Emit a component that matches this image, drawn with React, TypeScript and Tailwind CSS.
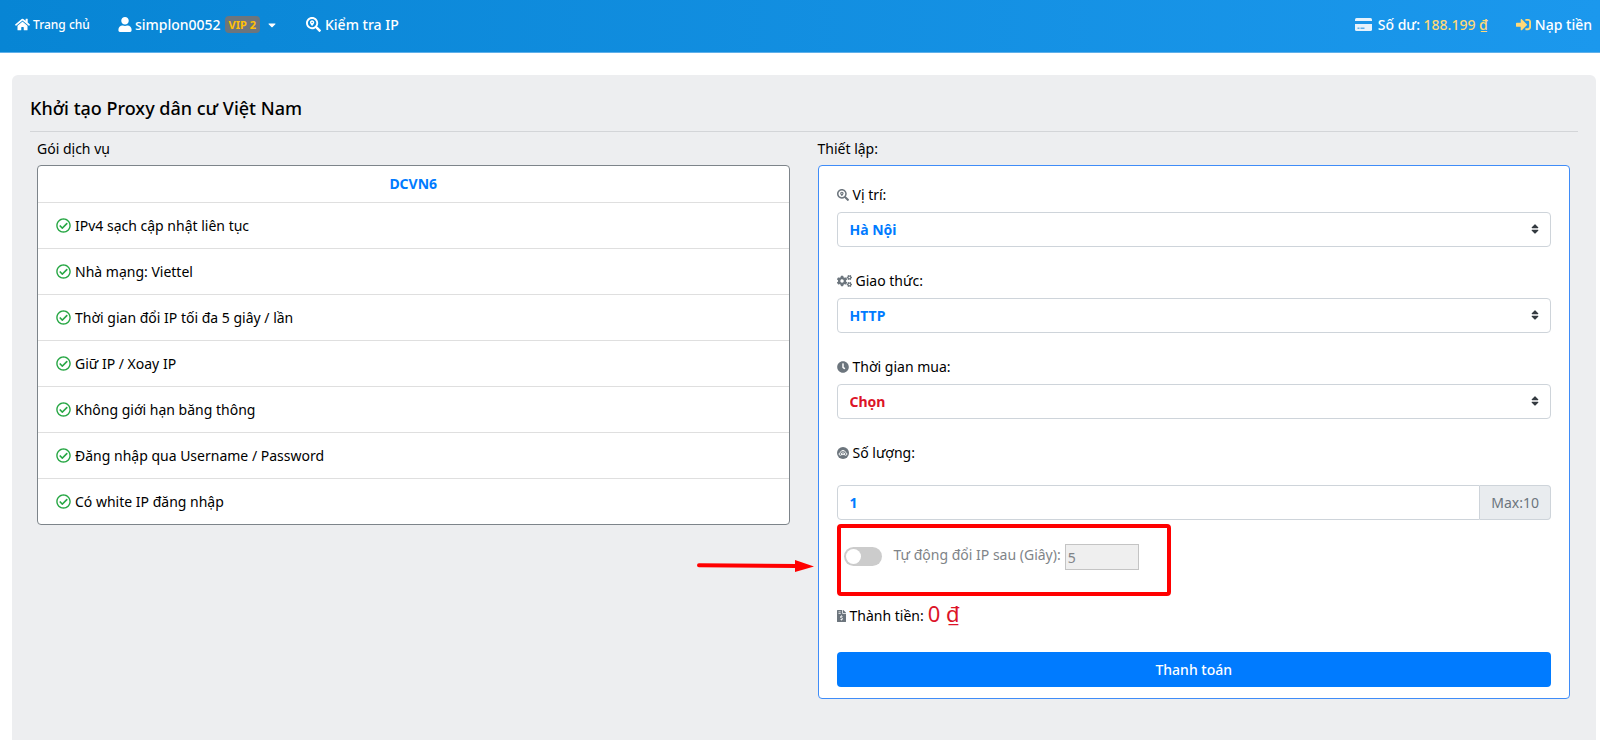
import React, { useState } from 'react';
import {
  FaHome,
  FaUser,
  FaSearchLocation,
  FaSignInAlt,
  FaRegCheckCircle,
  FaCogs,
  FaClock,
  FaCaretDown,
  FaSort,
  FaFileInvoiceDollar,
} from 'react-icons/fa';

const features = [
  'IPv4 sạch cập nhật liên tục',
  'Nhà mạng: Viettel',
  'Thời gian đổi IP tối đa 5 giây / lần',
  'Giữ IP / Xoay IP',
  'Không giới hạn băng thông',
  'Đăng nhập qua Username / Password',
  'Có white IP đăng nhập',
];

const CardIcon = () => (
  <svg viewBox="0 0 17 13" className="w-[17px] h-[13px]" fill="none">
    <rect x="0" y="0" width="17" height="13" rx="1.5" fill="#e6f2fc" />
    <rect x="0" y="3" width="17" height="3" fill="#1a94e8" />
    <path d="M2.5 10.3h2M5.5 10.3h4" stroke="#5aaeea" strokeWidth="1.4" />
  </svg>
);

const QuantityIcon = () => (
  <svg viewBox="0 0 12 12" className="w-3 h-3" fill="none">
    <circle cx="6" cy="6" r="6" fill="#6c757d" />
    <path d="M3.6 5a2.6 2.6 0 0 1 4.8 0" stroke="#fff" strokeWidth="0.9" />
    <circle cx="3.4" cy="7" r="1.3" stroke="#fff" strokeWidth="0.9" />
    <circle cx="8.6" cy="7" r="1.3" stroke="#fff" strokeWidth="0.9" />
    <path d="M6 4.4v2.8M4.6 7.6h2.8" stroke="#fff" strokeWidth="0.9" />
  </svg>
);

type SelectFieldProps = {
  id: string;
  label: string;
  icon: React.ReactNode;
  options: string[];
  color: string;
};

const SelectField = ({ id, label, icon, options, color }: SelectFieldProps) => (
  <div className="mb-[23px]">
    <label htmlFor={id} className="flex items-center gap-1 h-[22px] mb-[6px]">
      <span className="text-[#6c757d] text-xs">{icon}</span>
      {label}
    </label>
    <div className="relative">
      <select
        id={id}
        className={`appearance-none block w-full h-[35px] px-3 bg-white border border-[#ced4da] rounded text-sm font-bold ${color}`}
      >
        {options.map((option) => (
          <option key={option}>{option}</option>
        ))}
      </select>
      <FaSort className="absolute right-[10px] top-[11px] w-3 h-3 text-[#343a40] pointer-events-none" />
    </div>
  </div>
);

const Navbar = () => (
  <nav className="flex items-center justify-between h-[53px] pl-[15px] pr-2 bg-linear-to-r from-[#0785d4] to-[#1b98ed] border-b border-[#5fb0ea] text-white text-sm font-medium">
    <div className="flex items-center pb-[3px]">
      <a href="#" className="flex items-center gap-[3px] text-xs">
        <FaHome className="w-[15px] h-[15px]" /> Trang chủ
      </a>
      <a href="#" className="flex items-center ml-7">
        <FaUser className="w-[14px] h-[15px] mr-[3px]" />
        simplon0052
        <span className="ml-1 px-1 h-[17px] leading-[17px] rounded bg-[#6c757d] text-[#ffc107] text-[11px] font-bold">VIP 2</span>
        <FaCaretDown className="ml-[6px] w-3 h-3" />
      </a>
      <a href="#" className="flex items-center gap-1 ml-7">
        <FaSearchLocation className="w-[15px] h-[15px]" /> Kiểm tra IP
      </a>
    </div>
    <div className="flex items-center pb-[3px]">
      <a href="#" className="flex items-center gap-[6px]">
        <CardIcon />
        <span>
          Số dư: <span className="text-[#ffd977]">188.199 ₫</span>
        </span>
      </a>
      <a href="#" className="flex items-center gap-1 ml-7">
        <FaSignInAlt className="w-[15px] h-[15px] text-[#ffd977]" /> Nạp tiền
      </a>
    </div>
  </nav>
);

export default function App() {
  const [quantity, setQuantity] = useState('1');
  const [autoChange, setAutoChange] = useState(false);

  return (
    <div className="flex flex-col min-h-screen bg-white text-black text-sm leading-[22px] font-['Noto_Sans',sans-serif]">
      <Navbar />

      <main className="flex-1 mt-[22px] ml-3 mr-1 px-[18px] pb-[42px] rounded-t-md bg-[#edeef0]">
        <h1 className="pt-5 pb-[9px] text-lg leading-[27px] font-medium border-b border-[#d3d5d8]">Khởi tạo Proxy dân cư Việt Nam</h1>

        <div className="grid grid-cols-2 items-start gap-7 pl-[7px] pr-2 pt-[6px]">
          {/* Package */}
          <section>
            <h2 className="h-[22px] mb-[5px]">Gói dịch vụ</h2>
            <div className="bg-white border border-[#7d848a] rounded">
              <div className="flex items-center justify-center h-9 font-bold text-[#007bff]">DCVN6</div>
              <ul>
                {features.map((feature) => (
                  <li key={feature} className="flex items-center gap-1 h-[46px] px-[18px] border-t border-[#dfdfdf]">
                    <FaRegCheckCircle className="w-[15px] h-[15px] text-[#28a745]" />
                    {feature}
                  </li>
                ))}
              </ul>
            </div>
          </section>

          {/* Settings */}
          <section>
            <h2 className="h-[22px] mb-[5px]">Thiết lập:</h2>
            <form className="bg-white border border-[#3f8cf8] rounded px-[18px] pt-[18px] pb-[11px]" onSubmit={(e) => e.preventDefault()}>
              <SelectField id="location" label="Vị trí:" icon={<FaSearchLocation />} options={['Hà Nội']} color="text-[#007bff]" />
              <SelectField
                id="protocol"
                label="Giao thức:"
                icon={<FaCogs className="w-[15px] h-3" />}
                options={['HTTP', 'SOCKS5']}
                color="text-[#007bff]"
              />
              <SelectField id="duration" label="Thời gian mua:" icon={<FaClock />} options={['Chọn']} color="text-[#dc1428]" />

              <label htmlFor="quantity" className="flex items-center gap-1 h-[22px] mb-[21px]">
                <QuantityIcon /> Số lượng:
              </label>
              <div className="flex h-[35px]">
                <input
                  id="quantity"
                  value={quantity}
                  onChange={(e) => setQuantity(e.target.value)}
                  className="flex-1 min-w-0 px-3 bg-white border border-[#ced4da] rounded-l font-bold text-[#007bff]"
                />
                <span className="flex items-center px-[11px] bg-[#e9ecef] border border-l-0 border-[#ced4da] rounded-r text-[#6c757d]">Max:10</span>
              </div>

              <div className="relative flex items-start w-[334px] h-[72px] mt-1 pt-4 pl-[3px] border-4 border-[#ff0000] rounded-sm text-[#808488]">
                <svg viewBox="0 0 118 14" className="absolute right-full top-[31px] mr-[26px] w-[118px] h-[14px]">
                  <path d="M2 6.2L100 7" stroke="#ff0000" strokeWidth="4" strokeLinecap="round" />
                  <path d="M98 1L117 7.4L98 13z" fill="#ff0000" />
                </svg>
                <input
                  type="checkbox"
                  aria-label="Tự động đổi IP"
                  checked={autoChange}
                  onChange={(e) => setAutoChange(e.target.checked)}
                  className="appearance-none relative mt-[3px] w-[38px] h-[19px] rounded-full bg-[#ccc] checked:bg-[#007bff] before:absolute before:left-[2px] before:top-[2px] before:size-[15px] before:rounded-full before:bg-white checked:before:left-[21px]"
                />
                <label htmlFor="interval" className="ml-3">Tự động đổi IP sau (Giây):</label>
                <input id="interval" defaultValue="5" disabled className="ml-1 w-[74px] h-[26px] px-[2px] bg-[#efefef] border border-[#c4c4c4]" />
              </div>

              <div className="flex items-center h-8 mt-1">
                <FaFileInvoiceDollar className="w-[9px] h-3 mr-1 text-[#6c757d]" />
                Thành tiền:
                <span className="ml-1 pb-[6px] text-[22px] text-[#dc1428]">0 ₫</span>
              </div>

              <button type="submit" className="block w-full h-[35px] mt-5 rounded bg-[#007bff] text-white font-medium">
                Thanh toán
              </button>
            </form>
          </section>
        </div>
      </main>
    </div>
  );
}
